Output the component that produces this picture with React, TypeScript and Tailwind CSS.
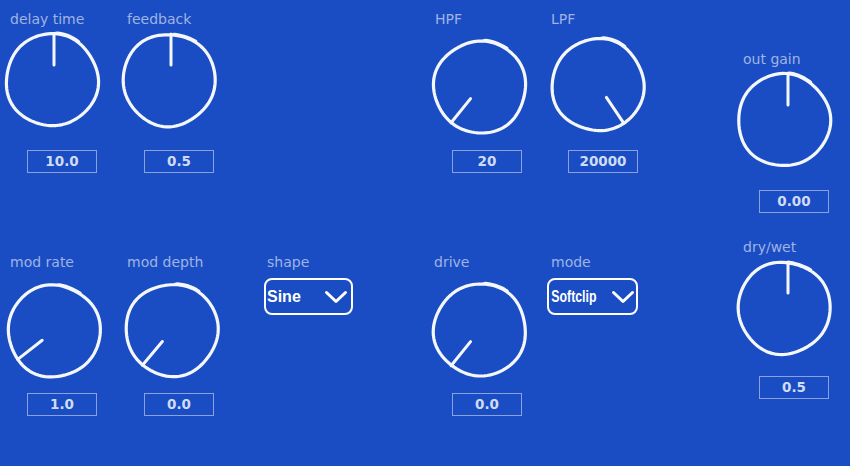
import React from "react";

function circlePath(seed: number) {
  const pts: string[] = [];
  const N = 90;
  for (let i = 0; i <= N + 8; i++) {
    const a = (i / N) * Math.PI * 2 - Math.PI / 2 + 0.05;
    const extra = i > N ? 0.8 : 0;
    const r =
      46 +
      0.6 * Math.sin(3 * a + seed) +
      0.35 * Math.sin(5 * a + seed * 2.3) +
      extra;
    pts.push(`${(50 + r * Math.cos(a)).toFixed(2)},${(50 + r * Math.sin(a)).toFixed(2)}`);
  }
  return "M" + pts.join(" L");
}

function Knob({ angle, seed, dx = 0 }: { angle: number; seed: number; dx?: number }) {
  const t = (angle * Math.PI) / 180;
  const x1 = 50 + dx + 15 * Math.sin(t);
  const y1 = 50 - 15 * Math.cos(t);
  const x2 = 50 + dx + 46 * Math.sin(t);
  const y2 = 50 - 46 * Math.cos(t);
  return (
    <svg width="100" height="100" viewBox="0 0 100 100" className="block">
      <path d={circlePath(seed)} fill="none" stroke="#f4f7fd" strokeWidth="3.2" strokeLinejoin="round" strokeLinecap="round" />
      <line x1={x1} y1={y1} x2={x2} y2={y2} stroke="#f4f7fd" strokeWidth="3" strokeLinecap="round" />
    </svg>
  );
}

function Label({ text, className }: { text: string; className: string }) {
  return (
    <div className={`text-[14px] leading-[16px] text-[#9fb4e4] font-['DejaVu_Sans',sans-serif] whitespace-nowrap ${className}`}>
      {text}
    </div>
  );
}

function ValueBox({ value, className }: { value: string; className: string }) {
  return (
    <div
      className={`w-[70px] h-[23px] border border-[#8aa3df] flex items-center justify-center text-[13.5px] font-bold text-[#d0dcf5] font-['DejaVu_Sans',sans-serif] ${className}`}
    >
      {value}
    </div>
  );
}

function Chevron() {
  return (
    <svg width="24" height="14" viewBox="0 0 24 14" className="block">
      <path d="M2.5 2.5 L12 11.5 L21.5 2.5" fill="none" stroke="#ffffff" strokeWidth="3" strokeLinecap="round" strokeLinejoin="round" />
    </svg>
  );
}

function Dropdown({ text, condensed, className }: { text: string; condensed?: boolean; className: string }) {
  return (
    <div
      className={`h-[37px] border-2 border-white rounded-[8px] flex items-center justify-between font-['Liberation_Sans',sans-serif] font-bold text-white text-[16px] ${className}`}
    >
      {condensed ? (
        <span className="pl-[3px] inline-block origin-left scale-x-[0.77] whitespace-nowrap">{text}</span>
      ) : (
        <span className="pl-[1px] whitespace-nowrap">{text}</span>
      )}
      {condensed ? (
        <div className="pr-[7px]">
          <Chevron />
        </div>
      ) : (
        <div className="pr-[3px]">
          <Chevron />
        </div>
      )}
    </div>
  );
}

export default function App() {
  return (
    <div className="w-[850px] h-[466px] bg-[#1a4dc3] flex overflow-hidden">
      {/* column 1 */}
      <div className="w-[117px] flex flex-col shrink-0">
        <Label text="delay time" className="ml-[10px] mt-[11px]" />
        <div className="ml-[2px] mt-[3px]">
          <Knob angle={0} seed={0.4} dx={2} />
        </div>
        <ValueBox value="10.0" className="ml-[27px] mt-[20px]" />
        <Label text="mod rate" className="ml-[10px] mt-[81px]" />
        <div className="ml-[4px] mt-[11px]">
          <Knob angle={-128} seed={1.7} />
        </div>
        <ValueBox value="1.0" className="ml-[27px] mt-[12px]" />
      </div>
      {/* column 2 */}
      <div className="w-[133px] flex flex-col shrink-0">
        <Label text="feedback" className="ml-[10px] mt-[11px]" />
        <div className="ml-[2px] mt-[3px]">
          <Knob angle={0} seed={2.6} dx={2} />
        </div>
        <ValueBox value="0.5" className="ml-[27px] mt-[20px]" />
        <Label text="mod depth" className="ml-[10px] mt-[81px]" />
        <div className="ml-[5px] mt-[10px]">
          <Knob angle={-140} seed={3.3} />
        </div>
        <ValueBox value="0.0" className="ml-[27px] mt-[13px]" />
      </div>
      {/* column 3 */}
      <div className="w-[180px] flex flex-col shrink-0">
        <Label text="shape" className="ml-[17px] mt-[254px]" />
        <Dropdown text="Sine" className="ml-[14px] mt-[8px] w-[89px]" />
      </div>
      {/* column 4 */}
      <div className="w-[115px] flex flex-col shrink-0">
        <Label text="HPF" className="ml-[5px] mt-[11px]" />
        <div className="ml-[0px] mt-[10px]">
          <Knob angle={-141} seed={4.1} />
        </div>
        <ValueBox value="20" className="ml-[22px] mt-[13px]" />
        <Label text="drive" className="ml-[4px] mt-[81px]" />
        <div className="ml-[0px] mt-[10px]">
          <Knob angle={-141} seed={5.2} />
        </div>
        <ValueBox value="0.0" className="ml-[22px] mt-[13px]" />
      </div>
      {/* column 5 */}
      <div className="w-[185px] flex flex-col shrink-0">
        <Label text="LPF" className="ml-[6px] mt-[11px]" />
        <div className="ml-[3px] mt-[8px]">
          <Knob angle={146} seed={6.0} />
        </div>
        <ValueBox value="20000" className="ml-[23px] mt-[15px]" />
        <Label text="mode" className="ml-[6px] mt-[81px]" />
        <Dropdown text="Softclip" condensed className="ml-[2px] mt-[8px] w-[91px]" />
      </div>
      {/* column 6 */}
      <div className="flex-1 flex flex-col">
        <Label text="out gain" className="ml-[13px] mt-[51px]" />
        <div className="ml-[4px] mt-[3px]">
          <Knob angle={0} seed={0.9} dx={4} />
        </div>
        <ValueBox value="0.00" className="ml-[29px] mt-[20px]" />
        <Label text="dry/wet" className="ml-[13px] mt-[26px]" />
        <div className="ml-[4px] mt-[3px]">
          <Knob angle={0} seed={2.2} dx={4} />
        </div>
        <ValueBox value="0.5" className="ml-[29px] mt-[18px]" />
      </div>
    </div>
  );
}
